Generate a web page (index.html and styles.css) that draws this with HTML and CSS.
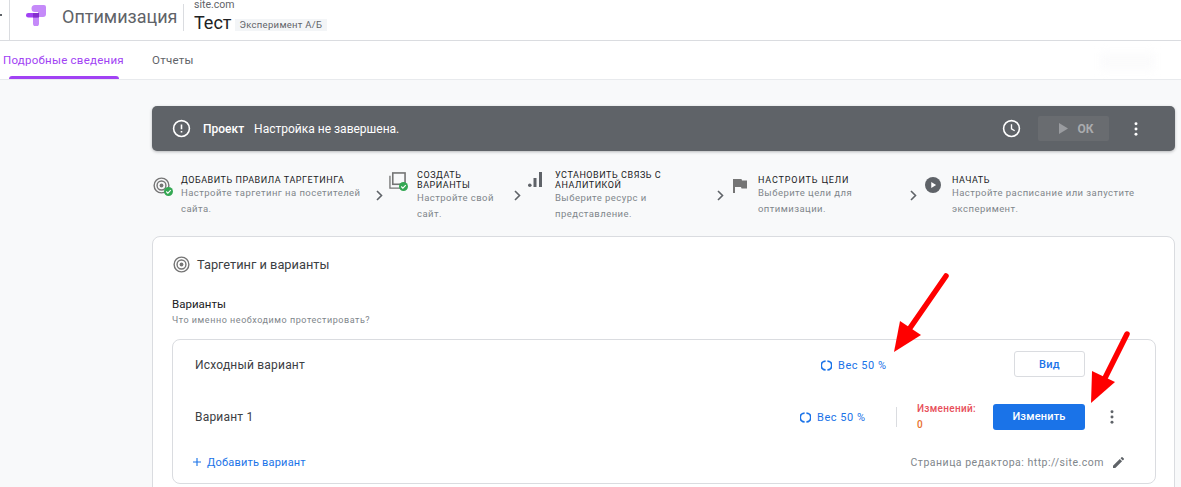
FILE: index.html
```html
<!DOCTYPE html>
<html lang="ru">
<head>
<meta charset="utf-8">
<title>Оптимизация</title>
<link rel="stylesheet" href="styles.css">
</head>
<body>
<header class="topbar">
  <div class="back"><span class="back-tick"></span></div>
  <svg class="logo" viewBox="0 0 20 21" width="20" height="21" aria-hidden="true">
    <path d="M9 0h9a2 2 0 0 1 2 2v7a3 3 0 0 1-3 3h-5V7H9a3.500 3.500 0 0 1 0-7z" fill="#c58af9"/>
    <path d="M7 9h6v9.500a3 3 0 0 1-6 0z" fill="#c58af9"/>
    <rect x="0" y="8" width="13" height="4.500" rx="2.250" fill="#a142f4"/>
    <path d="M7 8h6v4.500H7z" fill="#8430ce"/>
  </svg>
  <span class="product">Оптимизация</span>
  <div class="title-block">
    <div class="site">site.com</div>
    <div class="title-row"><span class="title">Тест</span><span class="badge">Эксперимент А/Б</span></div>
  </div>
</header>
<nav class="tabs">
  <a class="tab tab-active">Подробные сведения</a>
  <a class="tab tab-plain">Отчеты</a>
  <span class="smudge"></span>
</nav>
<main class="main">
  <section class="banner">
    <svg class="b-alert" viewBox="0 0 24 24" width="19" height="19"><circle cx="12" cy="12" r="10" fill="none" stroke="#fff" stroke-width="2"/><path d="M11 7h2v6h-2zM11 15h2v2h-2z" fill="#fff"/></svg>
    <strong class="b-strong">Проект</strong>
    <span class="b-text">Настройка не завершена.</span>
    <svg class="b-clock" viewBox="0 0 24 24" width="19" height="19"><circle cx="12" cy="12" r="10" fill="none" stroke="#fff" stroke-width="2"/><path d="M12 6.500V12.500l4 2.400" fill="none" stroke="#fff" stroke-width="1.700"/></svg>
    <div class="b-btn"><svg viewBox="0 0 10 12" width="9" height="11"><path d="M0 0l10 6-10 6z" fill="#9a9ca0"/></svg><span>ОК</span></div>
    <svg class="b-more" viewBox="0 0 4 16" width="4" height="14"><circle cx="2" cy="2" r="1.700" fill="#fff"/><circle cx="2" cy="8" r="1.700" fill="#fff"/><circle cx="2" cy="14" r="1.700" fill="#fff"/></svg>
  </section>

  <section class="steps">
    <div class="step step-1">
      <div class="s-icon s-icon-1">
        <svg viewBox="0 0 18 18" width="17" height="17"><circle cx="9" cy="9" r="7.800" fill="none" stroke="#757575" stroke-width="1.500"/><circle cx="9" cy="9" r="4.700" fill="none" stroke="#757575" stroke-width="1.500"/><circle cx="9" cy="9" r="2" fill="#757575"/></svg>
        <svg class="check" viewBox="0 0 10 10" width="9" height="9"><circle cx="5" cy="5" r="5" fill="#34a853"/><path d="M2.500 5l1.800 1.800 3.200-3.400" fill="none" stroke="#fff" stroke-width="1.200"/></svg>
      </div>
      <div class="s-body s-body-1"><div class="s-title">Добавить правила таргетинга</div><div class="s-desc">Настройте таргетинг на посетителей сайта.</div></div>
    </div>
    <svg class="chev" viewBox="0 0 7 11" width="7" height="11"><path d="M1 1l4.500 4.500L1 10" fill="none" stroke="#5f6368" stroke-width="1.600"/></svg>
    <div class="step step-2">
      <div class="s-icon s-icon-2">
        <svg viewBox="0 0 18 18" width="17" height="17"><path d="M1 4v13h13" fill="none" stroke="#757575" stroke-width="1.400"/><rect x="4" y="1" width="13" height="12" fill="none" stroke="#757575" stroke-width="1.700"/></svg>
        <svg class="check check-2" viewBox="0 0 10 10" width="9" height="9"><circle cx="5" cy="5" r="5" fill="#34a853"/><path d="M2.500 5l1.800 1.800 3.200-3.400" fill="none" stroke="#fff" stroke-width="1.200"/></svg>
      </div>
      <div class="s-body s-body-2"><div class="s-title">Создать варианты</div><div class="s-desc">Настройте свой сайт.</div></div>
    </div>
    <svg class="chev" viewBox="0 0 7 11" width="7" height="11"><path d="M1 1l4.500 4.500L1 10" fill="none" stroke="#5f6368" stroke-width="1.600"/></svg>
    <div class="step step-3">
      <div class="s-icon s-icon-3">
        <svg viewBox="0 0 14 15" width="14" height="15"><circle cx="1.800" cy="13.200" r="1.800" fill="#5f6368"/><rect x="5.500" y="6" width="3" height="9" fill="#5f6368"/><rect x="11" y="0" width="3" height="15" fill="#5f6368"/></svg>
      </div>
      <div class="s-body s-body-3"><div class="s-title">Установить связь с аналитикой</div><div class="s-desc">Выберите ресурс и представление.</div></div>
    </div>
    <svg class="chev" viewBox="0 0 7 11" width="7" height="11"><path d="M1 1l4.500 4.500L1 10" fill="none" stroke="#5f6368" stroke-width="1.600"/></svg>
    <div class="step step-4">
      <div class="s-icon s-icon-4">
        <svg viewBox="0 0 14 14" width="14" height="14"><path d="M0 0h8.500l.500 1.500H14v8H8.500L8 8H2v6H0z" fill="#757575"/></svg>
      </div>
      <div class="s-body s-body-4"><div class="s-title">Настроить цели</div><div class="s-desc">Выберите цели для оптимизации.</div></div>
    </div>
    <svg class="chev" viewBox="0 0 7 11" width="7" height="11"><path d="M1 1l4.500 4.500L1 10" fill="none" stroke="#5f6368" stroke-width="1.600"/></svg>
    <div class="step step-5">
      <div class="s-icon s-icon-5">
        <svg viewBox="0 0 18 18" width="16" height="16"><circle cx="9" cy="9" r="9" fill="#5f6368"/><path d="M7 5.500l5.500 3.500L7 12.500z" fill="#fff"/></svg>
      </div>
      <div class="s-body s-body-5"><div class="s-title">Начать</div><div class="s-desc">Настройте расписание или запустите эксперимент.</div></div>
    </div>
  </section>

  <section class="card">
    <div class="card-head">
      <svg viewBox="0 0 18 18" width="17" height="17"><circle cx="9" cy="9" r="7.800" fill="none" stroke="#757575" stroke-width="1.500"/><circle cx="9" cy="9" r="4.700" fill="none" stroke="#757575" stroke-width="1.500"/><circle cx="9" cy="9" r="2" fill="#757575"/></svg>
      <h2 class="card-title">Таргетинг и варианты</h2>
    </div>
    <div class="sect-title">Варианты</div>
    <div class="sect-sub">Что именно необходимо протестировать?</div>
    <div class="variants">
      <div class="v-row v-row-1">
        <span class="v-name">Исходный вариант</span>
        <span class="weight weight-1"><svg viewBox="0 0 12 12" width="11" height="11"><path d="M5 1.200a4.800 4.800 0 0 0 0 9.600M7 1.200a4.800 4.800 0 0 1 0 9.600" fill="none" stroke="#1a73e8" stroke-width="2"/></svg>Вес 50 %</span>
        <button class="btn-view">Вид</button>
      </div>
      <div class="v-row v-row-2">
        <span class="v-name">Вариант 1</span>
        <span class="weight weight-2"><svg viewBox="0 0 12 12" width="11" height="11"><path d="M5 1.200a4.800 4.800 0 0 0 0 9.600M7 1.200a4.800 4.800 0 0 1 0 9.600" fill="none" stroke="#1a73e8" stroke-width="2"/></svg>Вес 50 %</span>
        <span class="v-divider"></span>
        <div class="changes"><div>Изменений:</div><div class="changes-n">0</div></div>
        <button class="btn-edit">Изменить</button>
        <svg class="v-more" viewBox="0 0 4 16" width="4" height="14"><circle cx="2" cy="2" r="1.700" fill="#5f6368"/><circle cx="2" cy="8" r="1.700" fill="#5f6368"/><circle cx="2" cy="14" r="1.700" fill="#5f6368"/></svg>
      </div>
      <div class="v-foot">
        <a class="add"><svg viewBox="0 0 10 10" width="8" height="8"><path d="M5 0v10M0 5h10" stroke="#1a73e8" stroke-width="1.400"/></svg>Добавить вариант</a>
        <span class="editor">Страница редактора: http://site.com</span>
        <svg class="pencil" viewBox="0 0 12 12" width="11" height="11"><path d="M0 12V9.500L7.400 2.100l2.500 2.500L2.500 12zM8.200 1.300L9.300.2a.7.7 0 0 1 1 0l1.500 1.500a.7.7 0 0 1 0 1l-1.100 1.100z" fill="#5f6368"/></svg>
      </div>
    </div>
  </section>
</main>
<svg class="arrow arrow-1" viewBox="0 0 62 86" width="62" height="86"><path d="M56 6L20 58" stroke="#f00" stroke-width="5.500" stroke-linecap="round"/><path d="M4 82L10 51 31 65z" fill="#f00"/></svg>
<svg class="arrow arrow-2" viewBox="0 0 46 78" width="46" height="78"><path d="M40 6L18 50" stroke="#f00" stroke-width="5.500" stroke-linecap="round"/><path d="M4 75L5 43 28 54z" fill="#f00"/></svg>
</body>
</html>
```
FILE: styles.css
```css
* { box-sizing: border-box; }
html, body { margin: 0; height: 487px; overflow: hidden; }
body { background: #f8f9fa; font-family: Roboto, "Liberation Sans", sans-serif; color: #202124; position: relative; }

.topbar { height: 41px; background: #fff; border-bottom: 1px solid #dadce0; display: flex; align-items: flex-start; }
.back { width: 10px; height: 40px; border-right: 1px solid #dadce0; position: relative; margin-right: 16px; flex: none; }
.back-tick { position: absolute; left: 0; top: 14px; width: 2px; height: 2px; background: #5f6368; }
.logo { margin-top: 5px; flex: none; }
.product { margin: 5px 0 0 16px; font-size: 18px; line-height: 24px; color: #5f6368; width: 121px; flex: none; }
.title-block { border-left: 1px solid #dadce0; height: 27px; margin-top: 4px; padding-left: 10px; flex: none; }
.site { font-size: 10.500px; line-height: 11px; color: #5f6368; margin-top: -5px; }
.title-row { display: flex; align-items: center; margin-top: 1px; }
.title { font-size: 18px; line-height: 24px; color: #202124; }
.badge { margin-left: 3px; margin-top: 3px; background: #f3f5f7; color: #5f6368; font-size: 9.500px; line-height: 12px; padding: 0 5px; letter-spacing: .3px; }

.tabs { height: 39px; background: #fff; border-bottom: 1px solid #e8eaed; display: flex; position: relative; }
.tab { font-size: 11.500px; line-height: 38px; letter-spacing: .25px; position: relative; }
.tab-active { color: #a142f4; margin-left: 3px; width: 149px; }
.tab-active::after { content: ""; position: absolute; left: 6px; width: 110px; bottom: 0; height: 3px; background: #a142f4; border-radius: 3px 3px 0 0; }
.tab-plain { color: #5f6368; }
.smudge { position: absolute; left: 1100px; top: 12px; width: 55px; height: 17px; background: #fbfbfc; filter: blur(4px); }

.main { padding: 26px 6px 0 152px; }
.banner { height: 45px; background: #5f6368; border-radius: 5px; box-shadow: 0 1px 3px rgba(60,64,67,.35); display: flex; align-items: center; padding: 0 0 0 20px; color: #fff; font-size: 12px; }
.b-strong { margin-left: 12px; font-weight: 500; }
.b-text { margin-left: 10px; flex: 1; }
.b-btn { width: 71px; height: 25px; margin-left: 17px; padding-left: 6px; background: #696c70; border-radius: 2px; display: flex; align-items: center; justify-content: center; gap: 9px; color: #a9abae; font-size: 12px; font-weight: 700; }
.b-more { margin: 0 37px 0 25px; }

.steps { display: flex; align-items: flex-start; margin-top: 14px; height: 71px; }
.step { display: flex; flex: none; }
.step-1 { width: 224px; padding-left: 1px; padding-top: 10px; }
.step-2 { width: 125px; padding-top: 5px; margin-left: 6px; }
.step-3 { width: 189px; padding-top: 5px; margin-left: 7px; }
.step-4 { width: 177px; margin-left: 9px; padding-top: 10px; }
.step-5 { flex: 1; margin-left: 8px; padding-top: 10px; }
.chev { flex: none; margin-top: 25px; }
.s-icon { position: relative; flex: none; height: 18px; }
.check { position: absolute; right: -3px; bottom: -1px; }
.check-2 { right: 1px; bottom: -1px; }
.s-icon-1 { width: 17px; margin-right: 11px; margin-top: 2px; }
.s-icon-2 { width: 20px; margin-right: 8px; margin-top: 2px; }
.s-icon-3 { width: 14px; margin-right: 13px; margin-top: 2px; }
.s-icon-4 { width: 14px; margin-right: 11px; margin-top: 3px; }
.s-icon-5 { width: 16px; margin-right: 11px; margin-top: 2px; }
.s-title { font-size: 9px; line-height: 10px; text-transform: uppercase; letter-spacing: .55px; color: #202124; }
.s-desc { font-size: 9.500px; line-height: 16px; letter-spacing: .45px; color: #80868b; }
.s-body-1 { width: 190px; }
.s-body-2 { width: 88px; }
.s-body-3 { width: 125px; }
.s-body-4 { width: 110px; }
.s-body-4 .s-title { letter-spacing: .85px; }
.s-body-5 { width: 190px; }

.card { margin-top: 0; height: 260px; background: #fff; border: 1px solid #dadce0; border-radius: 8px; padding: 0 18px 0 19px; }
.card-head { display: flex; align-items: center; margin-top: 18px; margin-left: 1px; height: 18px; }
.card-title { margin: 0 0 0 7px; font-size: 12.800px; font-weight: 400; color: #3c4043; }
.sect-title { margin-top: 24px; font-size: 11.500px; line-height: 14px; color: #202124; }
.sect-sub { margin-top: 3px; font-size: 9px; line-height: 12px; letter-spacing: .55px; color: #80868b; }
.variants { margin-top: 13px; height: 145px; border: 1px solid #dadce0; border-radius: 8px; padding: 0 22px; }
.v-row { display: flex; align-items: center; font-size: 12px; color: #3c4043; }
.v-row-1 { height: 48px; }
.v-row-1 .v-name, .v-row-1 .weight { padding-top: 2px; }
.v-row-2 { height: 52px; padding-top: 5px; }
.v-name { width: 180px; flex: none; letter-spacing: .2px; }
.weight { display: flex; align-items: center; gap: 6px; font-size: 11px; color: #1a73e8; letter-spacing: .55px; flex: none; }
.weight-1 { margin-left: 446px; width: 193px; }
.weight-2 { margin-left: 425px; width: 81px; padding-top: 1px; }
.btn-view { width: 71px; height: 26px; background: #fff; border: 1px solid #dadce0; border-radius: 3px; color: #1a73e8; font: 500 11px Roboto, sans-serif; letter-spacing: .3px; }
.v-divider { width: 1px; height: 20px; background: #dadce0; flex: none; margin-left: 15px; margin-right: 20px; }
.changes { width: 76px; font-size: 10px; line-height: 16px; font-weight: 500; letter-spacing: .3px; color: #e8505b; flex: none; }
.changes-n { color: #e8702a; }
.btn-edit { width: 92px; height: 26px; background: #1a73e8; border: 0; border-radius: 3px; color: #fff; font: 500 11px Roboto, sans-serif; letter-spacing: .2px; flex: none; }
.v-more { margin-left: 25px; }
.v-foot { display: flex; align-items: center; height: 24px; margin-top: 10px; font-size: 11px; }
.add { display: flex; align-items: center; gap: 6px; color: #1a73e8; letter-spacing: .2px; margin-left: -2px; }
.editor { margin-left: auto; color: #80868b; letter-spacing: .5px; font-size: 10.500px; }
.pencil { margin-left: 9px; margin-right: 9px; }

.arrow { position: absolute; }
.arrow-1 { left: 890px; top: 270px; }
.arrow-2 { left: 1087px; top: 328px; }
```
